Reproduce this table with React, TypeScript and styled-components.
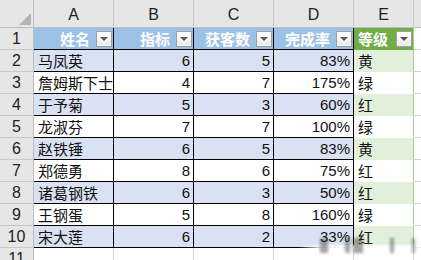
import styled, { createGlobalStyle } from 'styled-components';

const GlobalStyle = createGlobalStyle`
  html, body {
    margin: 0;
    padding: 0;
    background: #fff;
    overflow: hidden;
  }
`;

const GRID = '#d4d4d4';
const HEAD_LINE = '#bdbdbd';
const BLACK = '#000';
const BLUE_HEAD = '#9bc2e6';
const BLUE_BAND = '#d9e1f2';
const GREEN_HEAD = '#70ad47';
const GREEN_BAND = '#e2efda';
const GREEN_LINE = '#a9d08e';

const Frame = styled.div`
  position: relative;
  width: 421px;
  height: 260px;
  overflow: hidden;
`;

const Sheet = styled.div`
  display: grid;
  grid-template-columns: 34px 80px 80px 80px 80px 60px 1fr;
  grid-template-rows: 28px;
  grid-auto-rows: 22px;
  font-family: 'Liberation Sans', 'Noto Sans CJK SC', sans-serif;
  font-size: 15px;
  color: #111;
`;

const Corner = styled.div`
  position: relative;
  background: #e6e6e6;
  border-right: 1px solid ${HEAD_LINE};
  border-bottom: 1px solid ${HEAD_LINE};
  &::after {
    content: '';
    position: absolute;
    right: 2px;
    bottom: 2px;
    width: 0;
    height: 0;
    border-left: 12px solid transparent;
    border-bottom: 12px solid #b4b4b4;
  }
`;

const ColHead = styled.div`
  display: flex;
  align-items: center;
  justify-content: center;
  background: #e6e6e6;
  border-right: 1px solid #c8c8c8;
  border-bottom: 1px solid ${HEAD_LINE};
  font-size: 16px;
  color: #222;
  padding-top: 2px;
`;

const RowHead = styled.div`
  display: flex;
  align-items: center;
  justify-content: center;
  background: #e6e6e6;
  border-right: 1px solid ${HEAD_LINE};
  border-bottom: 1px solid #c8c8c8;
  font-size: 16px;
  color: #222;
`;

const Cell = styled.div<{ $bg: string; $right: string; $bottom: string; $align?: 'left' | 'right' }>`
  display: flex;
  align-items: center;
  justify-content: ${({ $align }) => ($align === 'right' ? 'flex-end' : 'flex-start')};
  padding: 0 3px 0 4px;
  background: ${({ $bg }) => $bg};
  border-right: 1px solid ${({ $right }) => $right};
  border-bottom: 1px solid ${({ $bottom }) => $bottom};
  white-space: nowrap;
  overflow: hidden;
`;

const HeadCell = styled.div<{ $bg: string; $right: string; $bottom: string; $align?: 'left' | 'right' }>`
  display: flex;
  align-items: center;
  justify-content: ${({ $align }) => ($align === 'left' ? 'space-between' : 'flex-end')};
  gap: 6px;
  padding: 0 1px 0 4px;
  background: ${({ $bg }) => $bg};
  border-right: 1px solid ${({ $right }) => $right};
  border-bottom: 1px solid ${({ $bottom }) => $bottom};
  color: #fff;
  font-family: 'Noto Sans CJK SC', sans-serif;
  font-weight: 700;
  font-size: 15px;
  white-space: nowrap;
`;

const Cjk = styled.span`
  font-family: 'Noto Sans CJK SC', sans-serif;
  font-size: 15px;
  line-height: 1;
`;

const DropBtn = styled.span`
  display: flex;
  align-items: center;
  justify-content: center;
  width: 14px;
  height: 14px;
  background: linear-gradient(#ffffff, #ececec);
  border: 1px solid #a0a0a0;
  &::after {
    content: '';
    width: 0;
    height: 0;
    border-left: 4px solid transparent;
    border-right: 4px solid transparent;
    border-top: 4px solid #555;
  }
`;

const Watermark = styled.div`
  position: absolute;
  left: 298px;
  top: 236px;
  width: 123px;
  height: 18px;
  pointer-events: none;
`;

const WaterBand = styled.div`
  position: absolute;
  left: 0;
  right: 0;
  top: 9px;
  height: 6px;
  background: linear-gradient(to right, rgba(255, 255, 255, 0), rgba(255, 255, 255, 0.95) 20%, rgba(255, 255, 255, 0.95) 90%, rgba(255, 255, 255, 0.6));
  filter: blur(1px);
`;

const WaterStroke = styled.div<{ $x: number; $w: number }>`
  position: absolute;
  left: ${({ $x }) => $x}px;
  top: 2px;
  width: ${({ $w }) => $w}px;
  height: 15px;
  background: rgba(50, 50, 50, 0.45);
  filter: blur(1.5px);
`;

const columns = ['A', 'B', 'C', 'D', 'E'];
const headers = ['姓名', '指标', '获客数', '完成率'];

const rows: [string, number, number, string, string][] = [
  ['马凤英', 6, 5, '83%', '黄'],
  ['詹姆斯下士', 4, 7, '175%', '绿'],
  ['于予菊', 5, 3, '60%', '红'],
  ['龙淑芬', 7, 7, '100%', '绿'],
  ['赵铁锤', 6, 5, '83%', '黄'],
  ['郑德勇', 8, 6, '75%', '红'],
  ['诸葛钢铁', 6, 3, '50%', '红'],
  ['王钢蛋', 5, 8, '160%', '绿'],
  ['宋大莲', 6, 2, '33%', '红'],
];

const strokes = [
  { x: 22, w: 8 },
  { x: 47, w: 5 },
  { x: 55, w: 10 },
  { x: 92, w: 4 },
  { x: 114, w: 3 },
];

export default function App() {
  return (
    <Frame>
      <GlobalStyle />
      <Sheet>
        <Corner />
        {columns.map((c) => (
          <ColHead key={c}>{c}</ColHead>
        ))}
        <ColHead />

        <RowHead>1</RowHead>
        {headers.map((h) => (
          <HeadCell key={h} $bg={BLUE_HEAD} $right={BLACK} $bottom={BLACK}>
            <span>{h}</span>
            <DropBtn />
          </HeadCell>
        ))}
        <HeadCell $bg={GREEN_HEAD} $right={GREEN_LINE} $bottom={GREEN_HEAD} $align="left">
          <span>等级</span>
          <DropBtn />
        </HeadCell>
        <Cell $bg="#fff" $right="#fff" $bottom={GRID} />

        {rows.map((r, i) => {
          const band = i % 2 === 0;
          const bg = band ? BLUE_BAND : '#fff';
          const ebg = band ? GREEN_BAND : '#fff';
          return [
            <RowHead key={`h${i}`}>{i + 2}</RowHead>,
            <Cell key={`a${i}`} $bg={bg} $right={BLACK} $bottom={BLACK}>
              <Cjk>{r[0]}</Cjk>
            </Cell>,
            <Cell key={`b${i}`} $bg={bg} $right={BLACK} $bottom={BLACK} $align="right">
              {r[1]}
            </Cell>,
            <Cell key={`c${i}`} $bg={bg} $right={BLACK} $bottom={BLACK} $align="right">
              {r[2]}
            </Cell>,
            <Cell key={`d${i}`} $bg={bg} $right={BLACK} $bottom={BLACK} $align="right">
              {r[3]}
            </Cell>,
            <Cell key={`e${i}`} $bg={ebg} $right={GREEN_LINE} $bottom={i === rows.length - 1 ? GRID : ebg}>
              <Cjk>{r[4]}</Cjk>
            </Cell>,
            <Cell key={`f${i}`} $bg="#fff" $right="#fff" $bottom={GRID} />,
          ];
        })}

        <RowHead>11</RowHead>
        {columns.map((c) => (
          <Cell key={`x${c}`} $bg="#fff" $right={GRID} $bottom={GRID} />
        ))}
        <Cell $bg="#fff" $right="#fff" $bottom={GRID} />
      </Sheet>
      <Watermark>
        <WaterBand />
        {strokes.map((s) => (
          <WaterStroke key={s.x} $x={s.x} $w={s.w} />
        ))}
      </Watermark>
    </Frame>
  );
}
